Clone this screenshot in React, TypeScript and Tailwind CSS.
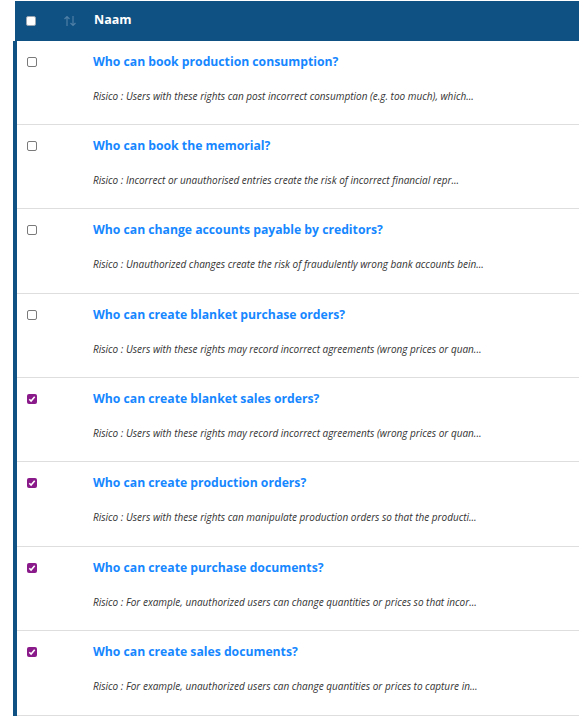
import React from "react";

type Item = { title: string; risk: string; checked: boolean };

const items: Item[] = [
  { title: "Who can book production consumption?", risk: "Users with these rights can post incorrect consumption (e.g. too much), which...", checked: false },
  { title: "Who can book the memorial?", risk: "Incorrect or unauthorised entries create the risk of incorrect financial repr...", checked: false },
  { title: "Who can change accounts payable by creditors?", risk: "Unauthorized changes create the risk of fraudulently wrong bank accounts bein...", checked: false },
  { title: "Who can create blanket purchase orders?", risk: "Users with these rights may record incorrect agreements (wrong prices or quan...", checked: false },
  { title: "Who can create blanket sales orders?", risk: "Users with these rights may record incorrect agreements (wrong prices or quan...", checked: true },
  { title: "Who can create production orders?", risk: "Users with these rights can manipulate production orders so that the producti...", checked: true },
  { title: "Who can create purchase documents?", risk: "For example, unauthorized users can change quantities or prices so that incor...", checked: true },
  { title: "Who can create sales documents?", risk: "For example, unauthorized users can change quantities or prices to capture in...", checked: true },
];

function Check({ checked, header }: { checked?: boolean; header?: boolean }) {
  if (checked) {
    return (
      <span className="w-[10px] h-[10px] rounded-[2px] bg-[#8a1a8a] flex items-center justify-center">
        <svg width="8" height="8" viewBox="0 0 8 8">
          <path d="M1.3 4.2 L3.1 6 L6.7 1.8" stroke="white" strokeWidth="1.6" fill="none" />
        </svg>
      </span>
    );
  }
  return (
    <span
      className={`w-[10px] h-[10px] rounded-[2px] border ${header ? "border-[#9aa6b2] bg-white" : "border-[#7a7a7a] bg-white"}`}
    />
  );
}

export default function App() {
  return (
    <div className="w-[579px] h-[721px] overflow-hidden bg-white font-['Open_Sans',sans-serif] pt-px">
      {/* Header */}
      <div className="ml-[15px] h-[39.5px] bg-[#0f5183] flex items-center">
        <div className="w-[11px] ml-[11px] flex"><Check header /></div>
        <svg className="ml-[26px]" width="14" height="12" viewBox="0 0 14 12">
          <path d="M4 11 V1.5 M1.5 4 L4 1.5 L6.5 4" stroke="#4f7fa6" strokeWidth="1.2" fill="none" />
          <path d="M10 1 V10.5 M7.5 8 L10 10.5 L12.5 8" stroke="#4f7fa6" strokeWidth="1.2" fill="none" />
        </svg>
        <span className="ml-[17px] text-white font-bold text-[12.5px]">Naam</span>
      </div>

      {/* Rows */}
      <div className="ml-[13px] border-l-4 border-[#0f5183]">
        {items.map((it, i) => (
          <div key={i} className="h-[84.4px] border-b border-[#dedede] flex">
            <div className="w-[76px] pl-[10px] pt-[16px] flex items-start">
              <Check checked={it.checked} />
            </div>
            <div className="pt-[11px]">
              <p className="text-[#1687ff] font-bold text-[12.2px] leading-[20px]">{it.title}</p>
              <p className="mt-[17px] text-[#333] italic text-[10px] leading-[14px]">
                Risico : {it.risk}
              </p>
            </div>
          </div>
        ))}
      </div>
    </div>
  );
}
